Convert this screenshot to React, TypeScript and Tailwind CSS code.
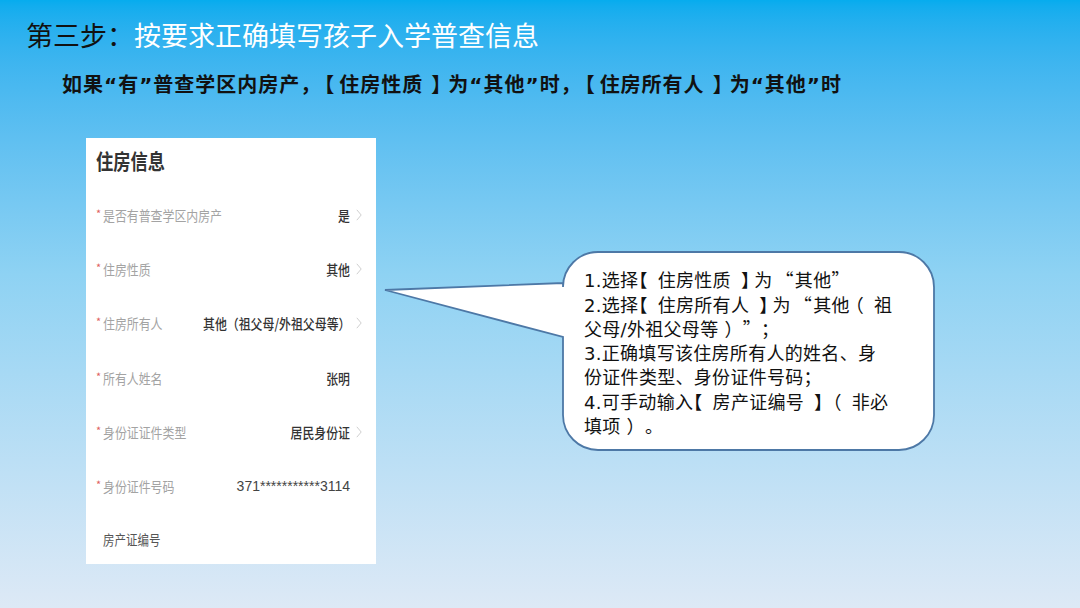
import React from "react";

type Row = { label: string; value?: string; req: boolean; chevron: boolean; mono?: boolean };

const rows: Row[] = [
  { label: "是否有普查学区内房产", value: "是", req: true, chevron: true },
  { label: "住房性质", value: "其他", req: true, chevron: true },
  { label: "住房所有人", value: "其他（祖父母/外祖父母等）", req: true, chevron: true },
  { label: "所有人姓名", value: "张明", req: true, chevron: false },
  { label: "身份证证件类型", value: "居民身份证", req: true, chevron: true },
  { label: "身份证件号码", value: "371***********3114", req: true, chevron: false, mono: true },
  { label: "房产证编号", req: false, chevron: false },
];

type PunctMap = Record<string, string>;

const HALT = "[font-feature-settings:'halt'] [font-family:'Noto_Sans_CJK_SC',sans-serif]";

const bubbleMap: PunctMap = {
  "【": "pr-[10px] " + HALT,
  "】": "pl-[10px] pr-[4px] " + HALT,
  "（": "pl-[5px] pr-[10px] " + HALT,
  "）": "pl-[6px] pr-[9px] " + HALT,
  "“": "pl-[12px] pr-[1px] " + HALT,
  "”": "pr-[9px] " + HALT,
};

const subMap: PunctMap = {
  "【": "pl-[3px] pr-[4px] " + HALT,
  "】": "pl-[8px] pr-[6px] " + HALT,
  "“": "[font-family:'DejaVu_Sans',sans-serif]",
  "”": "[font-family:'DejaVu_Sans',sans-serif]",
};

function rich(text: string, map: PunctMap) {
  const out: React.ReactNode[] = [];
  let buf = "";
  let k = 0;
  const flush = () => {
    if (buf) {
      out.push(<span key={k++}>{buf}</span>);
      buf = "";
    }
  };
  for (const ch of text) {
    const m = map[ch];
    if (m) {
      flush();
      out.push(
        <span key={k++} className={"inline-block " + m}>
          {ch}
        </span>
      );
    } else {
      buf += ch;
    }
  }
  flush();
  return out;
}

function Chevron({ show }: { show: boolean }) {
  return (
    <span className="w-[8px] h-[14px] flex items-center justify-center shrink-0">
      {show && (
        <svg width="6" height="12" viewBox="0 0 6 12">
          <path d="M0.8 0.8 L5.2 6 L0.8 11.2" fill="none" stroke="#cfcfcf" strokeWidth="1" />
        </svg>
      )}
    </span>
  );
}

function HousingCard() {
  return (
    <div className="w-[290px] h-[426px] bg-white overflow-hidden pl-[10px] pr-[13px] pt-[12px] flex flex-col">
      <div className="h-[24px] flex items-center">
        <span className="inline-block text-[21px] leading-none font-bold text-[#333] scale-x-[0.82] origin-left">
          住房信息
        </span>
      </div>
      <div className="h-[17px] shrink-0" />
      {rows.map((r) => (
        <div key={r.label} className="h-[54.2px] shrink-0 flex items-center">
          <span className="w-[7px] shrink-0 text-[#e06060] text-[11px] leading-none -mt-[3px]">
            {r.req ? "*" : ""}
          </span>
          <span
            className={
              "inline-block whitespace-nowrap leading-none origin-left scale-x-[0.85] " +
              (r.req ? "text-[14px] text-[#a3a3a3]" : "text-[13.5px] text-[#555]")
            }
          >
            {r.label}
          </span>
          <span className="flex-1" />
          {r.value &&
            (r.mono ? (
              <span className="text-[14px] leading-none text-[#444] [font-family:'Liberation_Sans',sans-serif] whitespace-nowrap">
                {r.value}
              </span>
            ) : (
              <span className="inline-block whitespace-nowrap text-[14px] leading-none text-[#333] font-medium origin-right scale-x-[0.85]">
                {r.value}
              </span>
            ))}
          {r.value && <span className="w-[5px] shrink-0" />}
          {r.value && <Chevron show={r.chevron} />}
        </div>
      ))}
    </div>
  );
}

function Callout() {
  const lines = [
    "1.选择【住房性质】为“其他”",
    "2.选择【住房所有人】为“其他（祖",
    "父母/外祖父母等）”；",
    "3.正确填写该住房所有人的姓名、身",
    "份证件类型、身份证件号码；",
    "4.可手动输入【房产证编号】（非必",
    "填项）。",
  ];
  return (
    <div className="relative w-[555px] h-[204px]">
      <svg className="absolute left-0 top-0" width="555" height="204" viewBox="0 0 555 204">
        <path
          d="M 215 2 H 516 A 35 35 0 0 1 551 37 V 165 A 35 35 0 0 1 516 200 H 215 A 35 35 0 0 1 180 165 V 87 L 2 40 L 180 33 V 37 A 35 35 0 0 1 215 2 Z"
          fill="#ffffff"
          stroke="#4d78a6"
          strokeWidth="1.8"
        />
      </svg>
      <div className="absolute left-[201px] top-[18px] text-[18px] leading-[23.7px] tracking-[0.3px] text-[#111] [font-family:'DejaVu_Sans','Noto_Sans_CJK_SC',sans-serif]">
        {lines.map((l) => (
          <div key={l} className="whitespace-nowrap">
            {rich(l, bubbleMap)}
          </div>
        ))}
      </div>
    </div>
  );
}

export default function App() {
  return (
    <div
      lang="zh-CN"
      className="w-[1080px] h-[608px] overflow-hidden bg-gradient-to-b from-[#06acee] via-[#8ed2f3] via-45% to-[#dde9f6] flex flex-col [font-family:'Noto_Sans_CJK_SC','Noto_Sans',sans-serif] [text-spacing-trim:space-all]"
    >
      <div className="pl-[26px] pt-[15px] h-[55px] text-[27px] leading-[40px] whitespace-nowrap">
        <span className="text-[#111]">第三步：</span>
        <span className="text-white">按要求正确填写孩子入学普查信息</span>
      </div>
      <div className="pl-[62px] mt-[14px] h-[30px] leading-[30px] text-[20px] font-bold text-[#111] whitespace-nowrap tracking-[1px]">
        {rich("如果“有”普查学区内房产，【住房性质】为“其他”时，【住房所有人】为“其他”时", subMap)}
      </div>
      <div className="flex pl-[86px] mt-[39px]">
        <HousingCard />
        <div className="ml-[7px] mt-[112px]">
          <Callout />
        </div>
      </div>
    </div>
  );
}
